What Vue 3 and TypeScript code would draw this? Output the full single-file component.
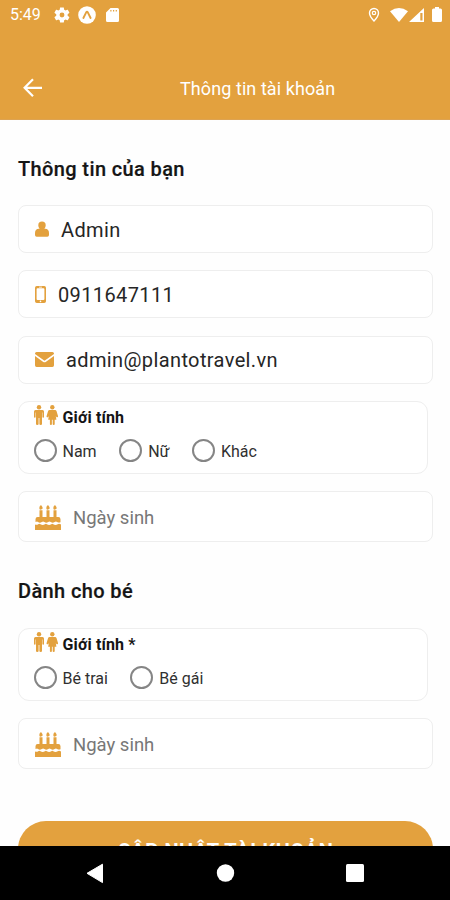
<script setup lang="ts">
import { ref } from 'vue'

interface TextField {
  id: string
  icon: 'user' | 'phone' | 'mail'
  value: string
}

const fields = ref<TextField[]>([
  { id: 'name', icon: 'user', value: 'Admin' },
  { id: 'phone', icon: 'phone', value: '0911647111' },
  { id: 'mail', icon: 'mail', value: 'admin@plantotravel.vn' },
])

interface Section {
  id: string
  title: string
  label: string
  options: string[]
}

const sections: Section[] = [
  { id: 'self', title: 'Thông tin của bạn', label: 'Giới tính', options: ['Nam', 'Nữ', 'Khác'] },
  { id: 'baby', title: 'Dành cho bé', label: 'Giới tính *', options: ['Bé trai', 'Bé gái'] },
]

const picked = ref<Record<string, string>>({})
const pick = (section: string, option: string): void => {
  picked.value[section] = option
}
</script>

<template>
  <div class="screen">
    <header class="top">
      <div class="status">
        <span class="clock">5:49</span>
        <svg class="gear" viewBox="1.500 1.500 21 21"><path fill="#fff" fill-rule="evenodd" d="M19.4 13c.1-.6.1-1.400 0-2l2.100-1.700c.2-.1.3-.4.1-.6l-2-3.500c-.1-.2-.4-.3-.6-.2l-2.500 1c-.5-.4-1.100-.7-1.700-1l-.4-2.600c0-.2-.2-.4-.5-.4h-4c-.2 0-.4.2-.5.4L9 5c-.6.3-1.200.6-1.700 1l-2.500-1c-.2-.1-.5 0-.6.2l-2 3.500c-.1.2-.1.5.1.6L4.500 11c-.1.700-.1 1.400 0 2l-2.200 1.700c-.2.1-.2.4-.1.6l2 3.500c.1.2.4.3.6.2l2.500-1c.5.4 1.100.7 1.700 1l.4 2.600c0 .2.2.4.5.4h4c.3 0 .5-.2.5-.4l.4-2.600c.6-.3 1.200-.6 1.700-1l2.500 1c.2.1.5 0 .6-.2l2-3.500c.1-.2.1-.5-.1-.6zM12 15.200a3.200 3.200 0 1 1 0-6.400 3.200 3.200 0 0 1 0 6.400z" /></svg>
        <svg class="expo" viewBox="0 0 18 18"><circle cx="9" cy="9" r="8.800" fill="#fff" /><path d="M5.400 12 8.200 6.300Q9 5.200 9.800 6.300L12.600 12" fill="none" stroke="#e3a13e" stroke-width="1.900" stroke-linecap="round" stroke-linejoin="round" /></svg>
        <svg class="card" viewBox="0 0 13 14"><path fill="#fff" fill-rule="evenodd" d="M4.500 0H11.500Q13 0 13 1.500V12.500Q13 14 11.500 14H1.500Q0 14 0 12.500V4.500zM4.300 2v1.600h1.200V2zm2.700 0v1.600h1.200V2zm2.700 0v1.600h1.200V2z" /></svg>
        <svg class="pin" viewBox="0 0 12 16"><path d="M6 1.500a4.500 4.500 0 0 0-4.500 4.500C1.500 9.300 6 14 6 14s4.500-4.700 4.500-8A4.500 4.500 0 0 0 6 1.500z" fill="none" stroke="#fff" stroke-width="1.400" /><circle cx="6" cy="6" r="1.700" fill="none" stroke="#fff" stroke-width="1.200" /></svg>
        <svg class="wifi" viewBox="0 0 18 14"><path d="M0 3.200Q9-3.200 18 3.200L9 14z" fill="#fff" /></svg>
        <svg class="signal" viewBox="0 0 15 14"><path d="M15 0v14H0zM11.300 5v7.500h2.200V5z" fill="#fff" fill-rule="evenodd" /></svg>
        <svg class="battery" viewBox="0 0 10 15"><path d="M3 0h4v1.500h1.500Q10 1.500 10 3v10.500Q10 15 8.500 15h-7Q0 15 0 13.500V3Q0 1.500 1.500 1.500H3z" fill="#fff" /></svg>
      </div>
      <div class="bar">
        <svg class="back" viewBox="0 0 20 20"><path d="M10 1.300 1.600 9.800 10 18.300M2 9.800h17" fill="none" stroke="#fff" stroke-width="2.200" /></svg>
        <h1 class="title">Thông tin tài khoản</h1>
      </div>
    </header>

    <main class="form">
      <section v-for="section in sections" :key="section.id" class="section">
        <h2 class="heading" :class="section.id">{{ section.title }}</h2>

        <template v-if="section.id === 'self'">
          <div v-for="field in fields" :key="field.id" class="box field" :class="field.icon">
            <svg v-if="field.icon === 'user'" class="icon" viewBox="0 0 14 16"><path d="M3.300 4.200a3.700 3.700 0 1 1 7.400 0c0 1.500-.6 2.900-1.500 3.600h1Q14 8 14 12v2Q14 15.700 12.300 15.700H1.700Q0 15.700 0 14v-2Q0 8 3.800 7.800h1C3.900 7.100 3.300 5.700 3.300 4.200z" /></svg>
            <svg v-else-if="field.icon === 'phone'" class="icon" viewBox="0 0 11 17"><path fill-rule="evenodd" d="M1.800 0h7.400Q11 0 11 1.800v13.400Q11 17 9.200 17H1.800Q0 17 0 15.200V1.800Q0 0 1.800 0zM2.500 2.300Q1.600 2.300 1.600 3.200v9.900q0 .9.9.9h6q.9 0 .9-.9V3.200q0-.9-.9-.9zM4 .8v.6h3V.8zM5.500 14.600a.8.800 0 1 0 0 1.600.8.800 0 0 0 0-1.600z" /></svg>
            <svg v-else class="icon" viewBox="0 0 19 15"><path d="M1.600 0h15.800Q19 0 19 1.600v.4L9.500 8.700 0 2v-.4Q0 0 1.600 0zM0 4l8.300 5.900q1.200.8 2.400 0L19 4v9.300Q19 15 17.400 15H1.600Q0 15 0 13.300z" /></svg>
            <span class="value">{{ field.value }}</span>
          </div>
        </template>

        <div class="box gender">
          <div class="gender-head">
            <svg class="people" viewBox="0 0 24 20">
              <circle cx="5" cy="2.200" r="2.200" />
              <path d="M1.500 5h7q1.500 0 1.500 1.500V12q0 .8-.8.8T8.400 12V7.500H8V19q0 .9-1.300.9T5.400 19v-6h-.8v6q0 .9-1.300.9T2 19V7.500h-.4V12q0 .8-.8.800T0 12V6.500Q0 5 1.500 5z" />
              <circle cx="18.300" cy="2.200" r="2.200" />
              <path d="M15.500 5h5.600q1 0 1.400 1l1.500 5q.3.900-.5 1.200t-1.100-.3l-.6-1 .6 3.800h-1.700v4.500q0 .7-1 .7t-1-.7v-4.500h-.8v4.500q0 .7-1 .7t-1-.7v-4.500h-1.700l.6-3.800-.6 1q-.3.600-1.100.3t-.5-1.200l1.500-5q.4-1 1.400-1z" />
            </svg>
            <span class="gender-label">{{ section.label }}</span>
          </div>
          <div class="radios" :class="section.id">
            <button v-for="option in section.options" :key="option" class="radio" type="button" @click="pick(section.id, option)">
              <span class="ring" :class="{ on: picked[section.id] === option }"></span>
              <span class="radio-text">{{ option }}</span>
            </button>
          </div>
        </div>

        <div class="box birth">
          <svg class="cake" viewBox="0 0 26 25">
            <path d="M6 0q1.700 1.900 1.700 3T6 4.600 4.300 3 6 0zm7 0q1.700 1.900 1.700 3T13 4.600 11.300 3 13 0zm7 0q1.700 1.900 1.700 3T20 4.600 18.300 3 20 0z" />
            <path d="M4.500 5.200h3V12h4V5.200h3V12h4V5.200h3V12h1.800Q25.500 12 25.500 14.200V17.200q-1.800.9-3.300-.3-1.300-1-2.600 0-1.900 1.500-3.800 0-1.300-1-2.600 0-1.900 1.500-3.800 0-1.300-1-2.600 0-1.900 1.500-3.800 0-1-.8-2.500.2V14.200Q.5 12 2.700 12h1.800z" />
            <path d="M0 19.500q2 .6 3.200-.3 1.100-.9 2.300 0 2.200 1.600 4.400 0 1-.8 2 0 2.200 1.600 4.400 0 1-.8 2 0 2.200 1.600 4.400 0 1.500-.9 3.300.3V25H0z" />
          </svg>
          <span class="placeholder">Ngày sinh</span>
        </div>
      </section>
      <button class="submit" type="button">CẬP NHẬT TÀI KHOẢN</button>
    </main>

    <nav class="nav">
      <svg viewBox="0 0 450 54">
        <path d="M87 27.300 102.500 18.200v18.400z" fill="#fff" stroke="#fff" stroke-linejoin="round" />
        <circle cx="225.500" cy="27" r="8.700" fill="#fff" />
        <rect x="346" y="18" width="18" height="18" rx="1.500" fill="#fff" />
      </svg>
    </nav>
  </div>
</template>

<style>
body {
  background: #fff;
}
</style>

<style scoped>
.screen {
  width: 450px;
  height: 900px;
  overflow: hidden;
  display: flex;
  flex-direction: column;
  background: #fefefe;
  font-family: Roboto, "Liberation Sans", sans-serif;
  color: #151515;
}
.screen * {
  box-sizing: border-box;
}
.top {
  height: 120px;
  flex: none;
  background: #e3a13e;
  color: #fff;
  border-bottom: 1px solid #dda352;
}
.status {
  display: flex;
  align-items: center;
  height: 29px;
  padding: 0 8px 0 10px;
}
.clock {
  width: 44px;
  font-size: 16px;
  line-height: 29px;
}
.status svg {
  flex: none;
}
.gear { width: 16px; height: 16px; }
.expo { width: 18px; height: 18px; margin-left: 8px; }
.card { width: 13px; height: 14px; margin-left: 10px; }
.pin { width: 12px; height: 16px; margin-left: auto; }
.wifi { width: 18px; height: 14px; margin-left: 10px; }
.signal { width: 15px; height: 14px; margin-left: 1px; }
.battery { width: 10px; height: 15px; margin-left: 8px; }
.bar {
  display: flex;
  align-items: center;
  height: 60px;
  margin-top: 29px;
  padding-left: 23px;
}
.back {
  width: 20px;
  height: 20px;
}
.title {
  margin: 2px 0 0 137px;
  font-size: 18px;
  letter-spacing: 0.08px;
  font-weight: 400;
  line-height: 24px;
  white-space: nowrap;
}
.form {
  flex: 1;
  min-height: 0;
  overflow: hidden;
  padding: 0 17px 0 18px;
}
.heading {
  margin: 0;
  font-size: 20px;
  letter-spacing: 0.38px;
  font-weight: 500;
  line-height: 24px;
  -webkit-text-stroke: 0.2px #151515;
}
.heading.self { padding: 37px 0 24px; }
.heading.baby { padding: 37px 0 25px; }
.box {
  border: 1.5px solid #eeeeee;
  border-radius: 8px;
  background: #fff;
}
.field {
  display: flex;
  align-items: center;
  height: 48px;
  margin-bottom: 17.300px;
  padding-left: 16px;
}
.icon,
.people,
.cake {
  flex: none;
  fill: #e3a13e;
}
.user .icon { width: 14px; height: 16px; margin-right: 12px; }
.phone .icon { width: 11px; height: 17px; margin-right: 12px; }
.mail .icon { width: 19px; height: 15px; margin-right: 12px; }
.value {
  font-size: 20px;
  letter-spacing: 0.38px;
  padding-top: 1px;
  font-weight: 400;
  color: #262626;
}
.gender {
  width: 409.500px;
  height: 73px;
  border-radius: 11px;
  padding: 2px 0 0 14.500px;
}
.gender-head {
  display: flex;
  align-items: center;
  height: 23px;
}
.people {
  width: 24px;
  height: 20px;
}
.gender-label {
  margin: 4px 0 0 5px;
  font-size: 16px;
  letter-spacing: 0.15px;
  font-weight: 700;
}
.radios {
  display: flex;
  height: 48px;
  margin-bottom: -4px;
  align-items: center;
}
.radio {
  display: flex;
  align-items: center;
  gap: 6px;
  margin-right: 22.500px;
  padding: 0;
  border: 0;
  background: none;
  font: inherit;
  color: #303030;
}
.ring {
  width: 23px;
  height: 23px;
  border: 2px solid #858585;
  border-radius: 50%;
}
.ring.on {
  border-width: 7px;
}
.radio-text {
  font-size: 16px;
  line-height: 20px;
  padding-top: 2px;
}
.birth {
  display: flex;
  align-items: center;
  height: 51px;
  margin-top: 17px;
  padding: 2px 0 0 16px;
}
.cake {
  width: 26px;
  height: 25px;
  margin-right: 12px;
}
.placeholder {
  font-size: 18.500px;
  padding-top: 2px;
  color: #777;
}
.submit {
  display: block;
  width: 100%;
  height: 60px;
  margin-top: 52.500px;
  padding: 0 0 1px;
  border: 0;
  border-radius: 28px;
  background: #e3a13e;
  color: #fff;
  font-family: inherit;
  font-size: 20px;
  letter-spacing: 0.6px;
  font-weight: 700;
}
.nav {
  flex: none;
  height: 54px;
  background: #000;
}
.nav svg {
  display: block;
  width: 450px;
  height: 54px;
}
</style>
